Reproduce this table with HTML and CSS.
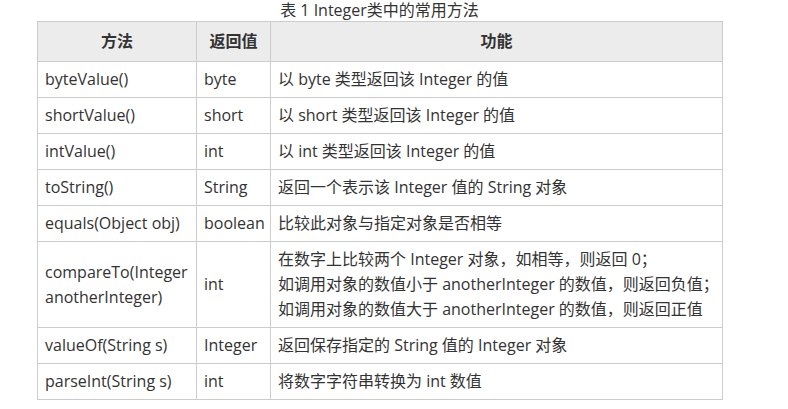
FILE: index.html
```html
<!DOCTYPE html>
<html lang="zh-CN">
<head>
<meta charset="utf-8">
<title>Integer类中的常用方法</title>
<link rel="stylesheet" href="styles.css">
</head>
<body>
<div class="wrap">
  <div class="caption">表 1 Integer类中的常用方法</div>
  <table class="methods">
    <colgroup>
      <col class="c1"><col class="c2"><col class="c3">
    </colgroup>
    <thead>
      <tr><th>方法</th><th>返回值</th><th>功能</th></tr>
    </thead>
    <tbody>
      <tr><td>byteValue()</td><td>byte</td><td>以 byte 类型返回该 Integer 的值</td></tr>
      <tr><td>shortValue()</td><td>short</td><td>以 short 类型返回该 Integer 的值</td></tr>
      <tr><td>intValue()</td><td>int</td><td>以 int 类型返回该 Integer 的值</td></tr>
      <tr><td>toString()</td><td>String</td><td>返回一个表示该 Integer 值的 String 对象</td></tr>
      <tr><td>equals(Object obj)</td><td>boolean</td><td>比较此对象与指定对象是否相等</td></tr>
      <tr><td>compareTo(Integer<br>anotherInteger)</td><td>int</td><td class="nowrap">在数字上比较两个 Integer 对象，如相等，则返回 0；<br>如调用对象的数值小于 anotherInteger 的数值，则返回负值；<br>如调用对象的数值大于 anotherInteger 的数值，则返回正值</td></tr>
      <tr><td>valueOf(String s)</td><td>Integer</td><td>返回保存指定的 String 值的 Integer 对象</td></tr>
      <tr><td>parseInt(String s)</td><td>int</td><td>将数字字符串转换为 int 数值</td></tr>
    </tbody>
  </table>
</div>
</body>
</html>
```

FILE: styles.css
```css
html, body {
  margin: 0;
  padding: 0;
  background: #ffffff;
}

body {
  font-family: "Open Sans", "Noto Sans CJK SC", sans-serif;
  font-size: 16px;
  color: #333333;
}

.wrap {
  width: 685px;
  margin-left: 37px;
}

.caption {
  text-align: center;
  line-height: 21px;
  height: 21px;
  color: #333333;
}

.methods {
  border-collapse: collapse;
  width: 685px;
  table-layout: fixed;
}

.methods .c1 { width: 159px; }
.methods .c2 { width: 74px; }
.methods .c3 { width: 452px; }

.methods th,
.methods td {
  border: 1px solid #cccccc;
  line-height: 25px;
  text-align: left;
  vertical-align: middle;
  padding: 5px 7px;
}

.methods td.nowrap {
  white-space: nowrap;
}

.methods th {
  background: #ececec;
  font-weight: bold;
  text-align: center;
  padding: 7px 7px;
  color: #333333;
}
```
